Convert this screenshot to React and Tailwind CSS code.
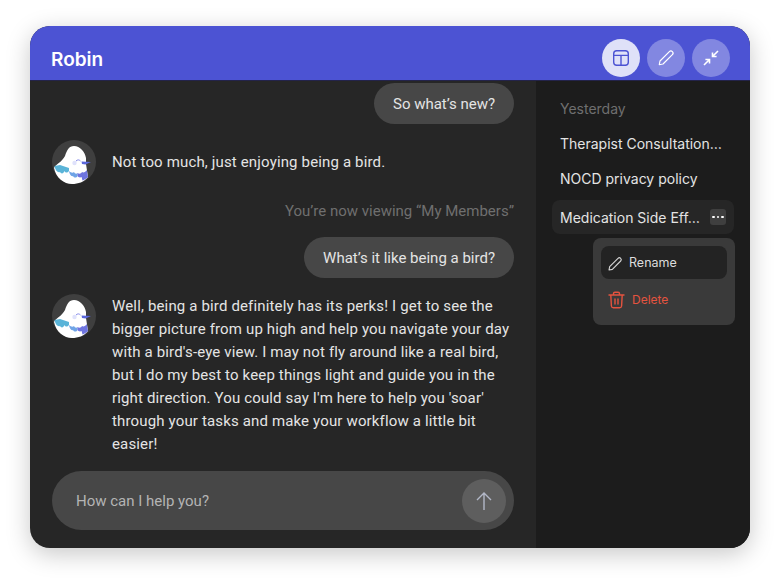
import React from "react";

const Bird = () => (
  <svg width="44" height="44" viewBox="0 0 44 44" className="shrink-0">
    <circle cx="22" cy="22" r="22" fill="#3f3f3f" />
    <path d="M2 28C4 24 10 22 13 16C15 10 17 6 22 6C28 6 33 12 34 18L34 24L36 37C32 42 26 44 20 44C12 44 4 38 2 28Z" fill="#fff" />
    <path d="M2.500 26L8 25L14 27L17 28L17 31C15.500 33 13.500 33 12.500 31C11.500 34 9 34 8 32C6 33 3.500 31 2.500 26Z" fill="#5ab4d8" />
    <path d="M17 31C19 33 21 33 22 32C23 34 24.500 34 25.500 33L25.500 36C24.500 38 22 38 21 36C19 37 17.500 34 17 31Z" fill="#6fa4e6" />
    <path d="M25.500 33C27 34 29 34 30 32C31.500 33 33.500 32 34.800 30L36 37C34 39 32 40 30.500 40.500C30 39 30 38 29.500 37C28 38 26 37 25.500 36Z" fill="#6f75e0" />
    <circle cx="22.500" cy="23" r="2.200" fill="#dfe2fb" />
    <path d="M24 21C25.500 19.500 27 19.500 28.500 21" stroke="#7a80e6" strokeWidth="0.9" fill="none" />
    <path d="M29.500 21.500L39 22L33.500 24.500L30 24Z" fill="#5a67dc" />
  </svg>
);

const Pencil = ({ size = 18, color = "#fff", sw = 1.6 }) => (
  <svg width={size} height={size} viewBox="0 0 24 24" fill="none" stroke={color} strokeWidth={sw} strokeLinejoin="round" strokeLinecap="round">
    <path d="M3 21l1-5L16.500 3.500a2.800 2.800 0 0 1 4 4L8 20z" />
  </svg>
);

const Bubble = ({ children }) => (
  <div className="self-end h-[41px] px-[19px] pt-px flex items-center rounded-[21px] bg-[#474747] text-[15px] text-[#e4e4e4]">{children}</div>
);

export default function App() {
  return (
    <div className="w-[780px] h-[582px] bg-white pt-[26px] px-[30px] font-['Roboto',sans-serif] overflow-hidden">
      <div className="w-[720px] h-[522px] rounded-[20px] overflow-hidden flex flex-col bg-[#262626] shadow-[0_6px_24px_rgba(0,0,0,0.22)]">
        <header className="h-[55px] shrink-0 bg-[#4c53d3] border-b border-[#23234a] flex items-center justify-between pl-[21px] pr-[20px]">
          <span className="text-[19px] font-semibold text-white font-['Inter',sans-serif] mt-[14px]">Robin</span>
          <div className="flex gap-[7px] mt-[10px]">
            <div className="w-[38px] h-[38px] rounded-full bg-[#dfe1f8] flex items-center justify-center">
              <svg width="18" height="18" viewBox="0 0 18 18" fill="none" stroke="#4c53d3" strokeWidth="1.4">
                <rect x="1.700" y="1.700" width="14.600" height="14.600" rx="3" />
                <path d="M1.700 6.400H16.300M9 6.400V16.300" />
              </svg>
            </div>
            <div className="w-[38px] h-[38px] rounded-full bg-[#8287e1] flex items-center justify-center">
              <Pencil size={18} />
            </div>
            <div className="w-[38px] h-[38px] rounded-full bg-[#8287e1] flex items-center justify-center">
              <svg width="18" height="18" viewBox="0 0 18 18" fill="none" stroke="#fff" strokeWidth="1.6">
                <path d="M16 2L10.500 7.500M10.500 3.400V7.500H14.600M2 16L7.500 10.500M3.400 10.500H7.500V14.600" />
              </svg>
            </div>
          </div>
        </header>
        <div className="flex flex-1 min-h-0">
          <main className="w-[506px] shrink-0 px-[22px] pt-[2px] flex flex-col">
            <Bubble>So what’s new?</Bubble>
            <div className="mt-4 flex items-center gap-4 h-11">
              <Bird />
              <p className="text-[15px] text-[#e4e4e4] tracking-[0.15px]">Not too much, just enjoying being a bird.</p>
            </div>
            <p className="mt-[17px] self-end h-5 leading-5 text-[15px] text-[#6f6f6f]">You’re now viewing “My Members”</p>
            <div className="mt-4 flex flex-col"><Bubble>What’s it like being a bird?</Bubble></div>
            <div className="mt-4 flex gap-4">
              <Bird />
              <p className="w-[402px] pt-px text-[15px] leading-[23px] text-[#e4e4e4] tracking-[0.15px]">
                Well, being a bird definitely has its perks! I get to see the bigger picture from up high and help you navigate your day with a bird's-eye view. I may not fly around like a real bird, but I do my best to keep things light and guide you in the right direction. You could say I'm here to help you 'soar' through your tasks and make your workflow a little bit easier!
              </p>
            </div>
            <div className="mt-[15px] h-[59px] rounded-[30px] bg-[#474747] flex items-center justify-between pl-6 pr-2">
              <span className="text-[15px] text-[#b4b4b4] pt-[2px]">How can I help you?</span>
              <div className="w-11 h-11 rounded-full bg-[#5e5e5e] flex items-center justify-center">
                <svg width="18" height="20" viewBox="0 0 18 20" fill="none" stroke="#b3b8c8" strokeWidth="1.4">
                  <path d="M9 19V2M2 9L9 2L16 9" />
                </svg>
              </div>
            </div>
          </main>
          <aside className="flex-1 bg-[#1c1c1c] px-4 font-['Inter',sans-serif] flex flex-col relative">
            <p className="mt-[18px] h-5 leading-5 pl-2 text-[14px] text-[#6f6f6f]">Yesterday</p>
            <p className="mt-[15px] h-5 leading-5 pl-2 text-[14px] text-[#e4e4e4] truncate">Therapist Consultation…</p>
            <p className="mt-[15px] h-5 leading-5 pl-2 text-[14px] text-[#e4e4e4]">NOCD privacy policy</p>
            <div className="mt-[11px] h-[34px] w-[182px] rounded-lg bg-[#262626] flex items-center justify-between pl-2 pr-2 text-[14px] text-[#e4e4e4]">
              <span>Medication Side Eff…</span>
              <div className="w-4 h-4 rounded-[3px] bg-[#3f3f3f] flex items-center justify-center gap-[2px]">
                <i className="block w-[2.500px] h-[2.500px] rounded-full bg-white" />
                <i className="block w-[2.500px] h-[2.500px] rounded-full bg-white" />
                <i className="block w-[2.500px] h-[2.500px] rounded-full bg-white" />
              </div>
            </div>
            <div className="absolute left-[57px] top-[157px] w-[142px] h-[87px] rounded-lg bg-[#3a3a3a] p-2 flex flex-col">
              <div className="h-[33px] pt-[2px] rounded-lg bg-[#232323] flex items-center gap-[6px] pl-[6px] text-[12.500px] text-[#dcdcdc]">
                <Pencil size={16} color="#d4d4d4" sw={1.7} />
                Rename
              </div>
              <div className="mt-[4px] h-[34px] flex items-center gap-[7px] pl-[7px] text-[12px] text-[#e5533f]">
                <svg width="17" height="18" viewBox="0 0 17 18" fill="none" stroke="#e5533f" strokeWidth="1.4" strokeLinecap="round">
                  <path d="M1 4H16M5.500 4V2.600A1.400 1.400 0 0 1 6.900 1.200H10.100A1.400 1.400 0 0 1 11.500 2.600V4M2.800 4L3.400 15A2 2 0 0 0 5.400 16.800H11.600A2 2 0 0 0 13.600 15L14.200 4M7 8V13M10 8V13" />
                </svg>
                Delete
              </div>
            </div>
          </aside>
        </div>
      </div>
    </div>
  );
}
